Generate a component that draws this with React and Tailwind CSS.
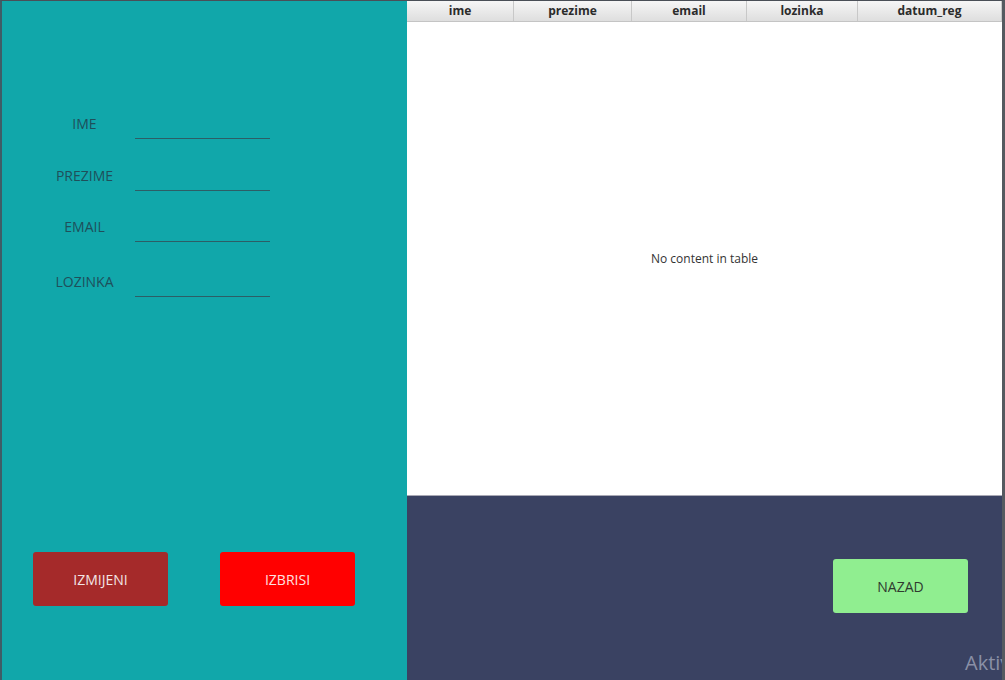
import React from "react";

const columns = [
  { name: "ime", w: "w-[107px]" },
  { name: "prezime", w: "w-[118px]" },
  { name: "email", w: "w-[115px]" },
  { name: "lozinka", w: "w-[111px]" },
  { name: "datum_reg", w: "flex-1" },
];

function Field({ label, className }) {
  return (
    <div className={`flex items-center h-[26px] ${className}`}>
      <div className="w-[101px] mb-[6px] text-center text-[14px] text-[#1f4f5a]">{label}</div>
      <input className="w-[135px] h-[26px] bg-transparent border-b border-[#2d5e66] outline-none text-[14px] text-[#1f4f5a]" />
    </div>
  );
}

export default function App() {
  return (
    <div
      className="w-[1005px] h-[680px] flex border-t border-[#4a4f57] border-l-2 border-l-[#3f5d66] border-r-[3px] border-r-[#555a60] overflow-hidden relative"
      style={{ fontFamily: '"Open Sans", "Noto Sans", sans-serif' }}
    >
      {/* left form panel */}
      <div className="w-[405px] h-full bg-[#11a7aa] flex flex-col pt-[112px]">
        <Field label="IME" className="ml-[32px]" />
        <Field label="PREZIME" className="ml-[32px] mt-[26px]" />
        <Field label="EMAIL" className="ml-[32px] mt-[25px]" />
        <Field label="LOZINKA" className="ml-[32px] mt-[29px]" />

        <div className="flex gap-[52px] ml-[31px] mt-[255px]">
          <button className="w-[135px] h-[54px] rounded-[3px] bg-[#a52a2a] text-[14px] text-[#f3e6e6]">
            IZMIJENI
          </button>
          <button className="w-[135px] h-[54px] rounded-[3px] bg-[#ff0000] text-[14px] text-[#ffe0e0]">
            IZBRISI
          </button>
        </div>
      </div>

      {/* right table panel */}
      <div className="flex-1 h-full flex flex-col bg-[#3a4262]">
        <div className="h-[21px] flex bg-gradient-to-b from-[#f6f6f6] to-[#dedede] border-b border-[#c4c4c4]">
          {columns.map((c) => (
            <div
              key={c.name}
              className={`${c.w} h-full flex items-center justify-center border-r border-[#c8c8c8] text-[12px] font-bold text-[#2b2b2b]`}
            >
              {c.name}
            </div>
          ))}
        </div>
        <div className="h-[474px] bg-white border-b border-[#a9a9b5] flex items-center justify-center">
          <span className="text-[12px] text-[#333]">No content in table</span>
        </div>
        <div className="flex-1 flex justify-end items-start pt-[63px] pr-[34px]">
          <button className="w-[135px] h-[54px] rounded-[3px] bg-[#90ee90] text-[14px] text-[#2f3a2f]">
            NAZAD
          </button>
        </div>
      </div>

      <div className="absolute left-[963px] top-[652px] text-[20px] text-[#8a90a6] leading-none">
        Aktiv
      </div>
    </div>
  );
}
